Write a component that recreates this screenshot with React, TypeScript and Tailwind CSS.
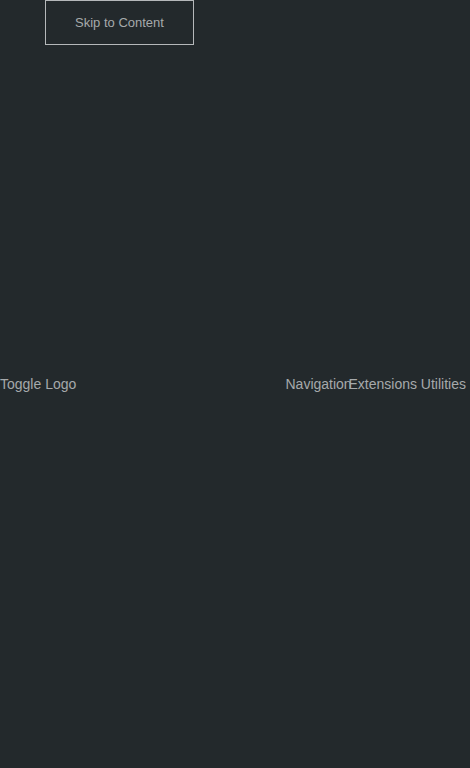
export default function App() {
  return (
    <div className="relative h-screen bg-[#23292c] text-[#a6a9ab] font-['Liberation_Sans',Arial,sans-serif]">
      <a
        href="#content"
        className="absolute left-[45px] top-0 flex h-[45px] w-[149px] items-center justify-center border border-[#b5b8ba] text-[13px] text-[#a6a9ab]"
      >
        Skip to Content
      </a>
      <header className="flex h-full items-center justify-between pr-[4px] text-[14px]">
        <div>Toggle Logo</div>
        <div className="flex">
          <div className="w-[63px] whitespace-nowrap">Navigation</div>
          <div>Extensions Utilities</div>
        </div>
      </header>
    </div>
  );
}
